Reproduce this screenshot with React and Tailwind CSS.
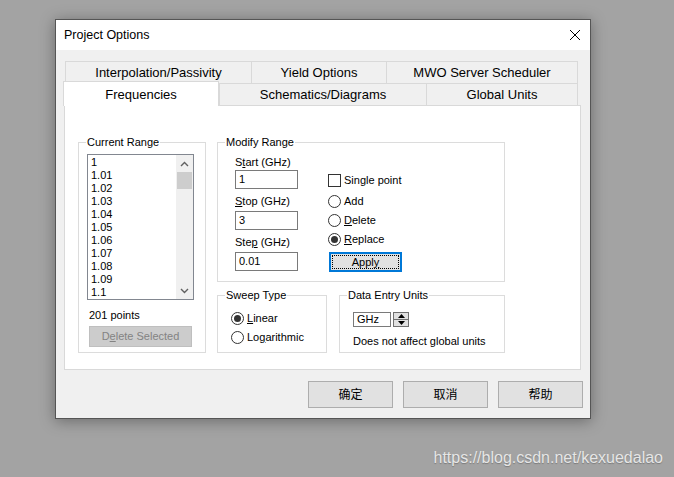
import React from "react";

const items = ["1", "1.01", "1.02", "1.03", "1.04", "1.05", "1.06", "1.07", "1.08", "1.09", "1.1"];

function Tab({ label, w, last }) {
  return (
    <div
      className={
        "flex h-[22px] items-center justify-center border-l border-t border-[#d9d9d9] bg-[#f0f0f0] text-[13px] " +
        (last ? "border-r " : "") +
        w
      }
    >
      {label}
    </div>
  );
}

function Radio({ checked }) {
  return (
    <span className="flex h-[13px] w-[13px] shrink-0 items-center justify-center rounded-full border border-[#333333] bg-white">
      {checked && <span className="h-[7px] w-[7px] rounded-full bg-[#333333]" />}
    </span>
  );
}

function Option({ checked, children, className }) {
  return (
    <div className={"flex h-[13px] items-center gap-[3px] leading-[13px] " + className}>
      <Radio checked={checked} />
      <span>{children}</span>
    </div>
  );
}

function Group({ title, className, children }) {
  return (
    <fieldset className={"border border-[#dcdcdc] " + className}>
      <legend className="ml-[7px] px-[1px] leading-[13px]">{title}</legend>
      {children}
    </fieldset>
  );
}

function Field({ label, value, className }) {
  return (
    <>
      <div className={"leading-[13px] " + className}>{label}</div>
      <div className="mt-[1px] flex h-[19px] w-[63px] items-center border border-[#7a7a7a] bg-white pl-[3px]">
        {value}
      </div>
    </>
  );
}

function Chevron({ up }) {
  return (
    <svg width="9" height="6" viewBox="0 0 9 6">
      <path
        d={up ? "M1 5 L4.5 1.5 L8 5" : "M1 1 L4.5 4.5 L8 1"}
        fill="none"
        stroke="#606060"
        strokeWidth="1.4"
      />
    </svg>
  );
}

export default function App() {
  return (
    <div className="h-[477px] w-full overflow-hidden bg-[#a3a3a3] pl-[55px] pt-[19px] font-['Liberation_Sans','Noto_Sans_CJK_SC',sans-serif] text-[11px] text-black">
      {/* dialog */}
      <div className="flex h-[400px] w-[536px] flex-col border border-[#555555] bg-[#f0f0f0] shadow-[0_2px_14px_rgba(0,0,0,0.35)]">
        <div className="flex h-[30px] shrink-0 items-center justify-between bg-white pl-[8px] pr-[9px]">
          <span className="text-[12.5px]">Project Options</span>
          <svg width="12" height="12" viewBox="0 0 12 12">
            <path d="M1 1 L11 11 M11 1 L1 11" stroke="#000" strokeWidth="1" />
          </svg>
        </div>

        <div className="flex flex-1 flex-col px-[8px] pt-[11px]">
          {/* tab rows */}
          <div className="ml-[1px] flex">
            <Tab label="Interpolation/Passivity" w="w-[186px]" />
            <Tab label="Yield Options" w="w-[135px]" />
            <Tab label="MWO Server Scheduler" w="w-[192px]" last />
          </div>
          <div className="flex h-[22px] items-end">
            <div className="relative z-10 -mb-[1px] -ml-[1px] flex h-[25px] w-[156px] justify-center border-l border-r border-t border-[#d9d9d9] bg-white pt-[3px] text-[13px]">
              Frequencies
            </div>
            <Tab label="Schematics/Diagrams" w="w-[207px]" />
            <Tab label="Global Units" w="w-[152px]" last />
          </div>

          {/* panel */}
          <div className="flex h-[265px] w-[517px] border border-[#d9d9d9] bg-white pl-[13px] pt-[30px]">
            <Group title="Current Range" className="h-[217px] w-[128px]">
              <div className="ml-[8px] mt-[5px] flex h-[146px] w-[107px] border border-[#828790] bg-white">
                <div className="flex-1 pl-[3px] pt-[1px]">
                  {items.map((t) => (
                    <div key={t} className="h-[13px] leading-[13px]">
                      {t}
                    </div>
                  ))}
                </div>
                <div className="flex w-[17px] flex-col items-center bg-[#f0f0f0]">
                  <div className="flex h-[17px] items-center justify-center">
                    <Chevron up />
                  </div>
                  <div className="h-[17px] w-[15px] bg-[#cdcdcd]" />
                  <div className="flex-1" />
                  <div className="flex h-[17px] items-center justify-center">
                    <Chevron />
                  </div>
                </div>
              </div>
              <div className="ml-[10px] mt-[9px] leading-[13px]">201 points</div>
              <div className="ml-[10px] mt-[4px] flex h-[21px] w-[103px] items-center justify-center border border-[#bfbfbf] bg-[#cccccc] text-[#838383]">
                <span>
                  D<span className="underline">e</span>lete Selected
                </span>
              </div>
            </Group>

            <div className="ml-[11px] flex flex-col">
              <Group title="Modify Range" className="h-[146px] w-[288px]">
                <div className="flex pl-[17px]">
                  <div className="flex w-[93px] flex-col">
                    <Field
                      className="mt-[7px]"
                      label={
                        <>
                          S<span className="underline">t</span>art (GHz)
                        </>
                      }
                      value="1"
                    />
                    <div className="mt-[6px] leading-[13px]">
                      <span className="underline">S</span>top (GHz)
                    </div>
                    <div className="mt-[3px] flex h-[19px] w-[63px] items-center border border-[#7a7a7a] bg-white pl-[3px]">
                      3
                    </div>
                    <div className="mt-[6px] leading-[13px]">
                      Ste<span className="underline">p</span> (GHz)
                    </div>
                    <div className="mt-[3px] flex h-[19px] w-[63px] items-center border border-[#7a7a7a] bg-white pl-[3px]">
                      0.01
                    </div>
                  </div>
                  <div className="flex flex-col">
                    <div className="mt-[25px] flex h-[13px] items-center gap-[3px]">
                      <span className="h-[13px] w-[13px] border border-[#333333] bg-white" />
                      <span>Single point</span>
                    </div>
                    <Option className="mt-[8px]">Add</Option>
                    <Option className="mt-[6px]">
                      <span className="underline">D</span>elete
                    </Option>
                    <Option className="mt-[6px]" checked>
                      <span className="underline">R</span>eplace
                    </Option>
                    <div className="ml-[1px] mt-[6px] flex h-[20px] w-[73px] items-center justify-center border-2 border-[#0078d7] bg-[#e1e1e1] p-[1px]">
                      <div className="flex h-full w-full items-center justify-center border border-dotted border-black">
                        <span>
                          Appl<span className="underline">y</span>
                        </span>
                      </div>
                    </div>
                  </div>
                </div>
              </Group>

              <div className="mt-[7px] flex">
                <Group title="Sweep Type" className="h-[64px] w-[110px]">
                  <div className="pl-[13px]">
                    <Option className="mt-[10px]" checked>
                      <span className="underline">L</span>inear
                    </Option>
                    <Option className="mt-[6px]">
                      Lo<span className="underline">g</span>arithmic
                    </Option>
                  </div>
                </Group>
                <Group title="Data Entry Units" className="ml-[12px] h-[64px] w-[166px]">
                  <div className="pl-[13px]">
                    <div className="mt-[10px] flex h-[15px] items-center">
                      <div className="flex h-[15px] w-[38px] items-center border border-[#7a7a7a] bg-white pl-[3px]">
                        GHz
                      </div>
                      <div className="ml-[2px] flex h-[15px] w-[16px] flex-col border border-[#707070] bg-[#e1e1e1]">
                        <div className="flex flex-1 items-center justify-center border-b border-[#707070]">
                          <svg width="7" height="4" viewBox="0 0 7 4">
                            <path d="M0 4 L3.5 0 L7 4 Z" fill="#000" />
                          </svg>
                        </div>
                        <div className="flex flex-1 items-center justify-center">
                          <svg width="7" height="4" viewBox="0 0 7 4">
                            <path d="M0 0 L3.5 4 L7 0 Z" fill="#000" />
                          </svg>
                        </div>
                      </div>
                    </div>
                    <div className="mt-[8px] leading-[13px]">Does not affect global units</div>
                  </div>
                </Group>
              </div>
            </div>
          </div>

          {/* buttons */}
          <div className="mr-[-1px] mt-[11px] flex justify-end gap-[10px] text-[12px]">
            <div className="flex h-[27px] w-[85px] items-center justify-center border border-[#adadad] bg-[#e1e1e1]">确定</div>
            <div className="flex h-[27px] w-[85px] items-center justify-center border border-[#adadad] bg-[#e1e1e1]">取消</div>
            <div className="flex h-[27px] w-[85px] items-center justify-center border border-[#adadad] bg-[#e1e1e1]">帮助</div>
          </div>
        </div>
      </div>

      <div className="mt-[30px] flex w-[608px] justify-end font-['Liberation_Sans',sans-serif] text-[16px] leading-[18px] text-[#e6e6e6] [text-shadow:0_1px_1px_rgba(0,0,0,0.25)]">
        https://blog.csdn.net/kexuedalao
      </div>
    </div>
  );
}
